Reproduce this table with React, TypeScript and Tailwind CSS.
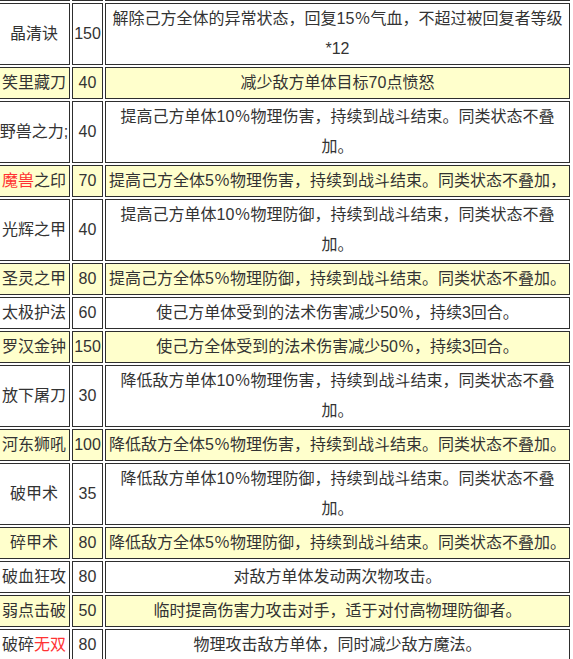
import React from 'react';

type Skill = {
  name: React.ReactNode;
  cost: string;
  desc: string;
};

const Red: React.FC<{ children: React.ReactNode }> = ({ children }) => (
  <span className="text-[#ff3333]">{children}</span>
);

const skills: Skill[] = [
  { name: '晶清诀', cost: '150', desc: '解除己方全体的异常状态，回复15％气血，不超过被回复者等级*12' },
  { name: '笑里藏刀', cost: '40', desc: '减少敌方单体目标70点愤怒' },
  { name: '野兽之力;', cost: '40', desc: '提高己方单体10％物理伤害，持续到战斗结束。同类状态不叠加。' },
  { name: <><Red>魔兽</Red>之印</>, cost: '70', desc: '提高己方全体5％物理伤害，持续到战斗结束。同类状态不叠加，' },
  { name: '光辉之甲', cost: '40', desc: '提高己方单体10％物理防御，持续到战斗结束，同类状态不叠加。' },
  { name: '圣灵之甲', cost: '80', desc: '提高己方全体5％物理防御，持续到战斗结束。同类状态不叠加。' },
  { name: '太极护法', cost: '60', desc: '使己方单体受到的法术伤害减少50％，持续3回合。' },
  { name: '罗汉金钟', cost: '150', desc: '使己方全体受到的法术伤害减少50％，持续3回合。' },
  { name: '放下屠刀', cost: '30', desc: '降低敌方单体10％物理伤害，持续到战斗结束，同类状态不叠加。' },
  { name: '河东狮吼', cost: '100', desc: '降低敌方全体5％物理伤害，持续到战斗结束。同类状态不叠加。' },
  { name: '破甲术', cost: '35', desc: '降低敌方单体10％物理防御，持续到战斗结束。同类状态不叠加。' },
  { name: '碎甲术', cost: '80', desc: '降低敌方全体5％物理防御，持续到战斗结束。同类状态不叠加。' },
  { name: '破血狂攻', cost: '80', desc: '对敌方单体发动两次物攻击。' },
  { name: '弱点击破', cost: '50', desc: '临时提高伤害力攻击对手，适于对付高物理防御者。' },
  { name: <>破碎<Red>无双</Red></>, cost: '80', desc: '物理攻击敌方单体，同时减少敌方魔法。' },
];

const cell = 'border border-[#2e2e2e] p-0 text-center align-middle leading-[30px]';

export default function App() {
  return (
    <div className="w-[573px] h-[659px] overflow-hidden bg-white">
      <table
        className="table-fixed border-separate border-spacing-[2px] w-[576px] ml-[-4px] mt-[-33px] text-[16px] text-[#333]"
        style={{ fontFamily: '"Liberation Sans", "Noto Sans CJK SC", sans-serif' }}
      >
        <tbody>
          {/* row cut off above the visible area */}
          <tr className="bg-[#ffffcc]">
            <td className={`${cell} w-[72px] h-[32px]`}></td>
            <td className={`${cell} w-[31px]`}></td>
            <td className={`${cell} w-[465px]`}></td>
          </tr>
          {skills.map((s, i) => (
            <tr key={i} className={i % 2 === 1 ? 'bg-[#ffffcc]' : 'bg-white'}>
              <td className={`${cell} whitespace-nowrap`}>{s.name}</td>
              <td className={cell}>{s.cost}</td>
              <td className={cell}>{s.desc}</td>
            </tr>
          ))}
        </tbody>
      </table>
    </div>
  );
}
